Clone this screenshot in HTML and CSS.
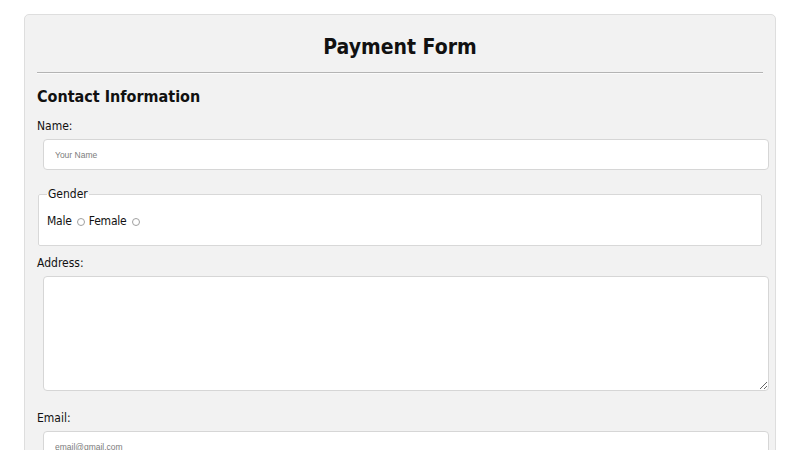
FILE: index.html
```html
<!DOCTYPE html>
<html lang="en">
<head>
<meta charset="utf-8">
<title>Payment Form</title>
<link rel="stylesheet" href="styles.css">
</head>
<body>
<form class="container">
  <h2 class="title">Payment Form</h2>
  <hr class="divider">
  <h3 class="section">Contact Information</h3>
  <label class="label" for="name">Name:</label>
  <input class="field" id="name" type="text" placeholder="Your Name">
  <fieldset class="group">
    <legend class="legend">Gender</legend>
    <div class="radios">
      <span class="opt">Male</span><input class="radio" type="radio" name="gender">
      <span class="opt">Female</span><input class="radio" type="radio" name="gender">
    </div>
  </fieldset>
  <label class="label label-address" for="address">Address:</label>
  <textarea class="field area" id="address"></textarea>
  <label class="label label-email" for="email">Email:</label>
  <input class="field" id="email" type="email" placeholder="email@gmail.com">
</form>
</body>
</html>
```
FILE: styles.css
```css
html, body {
  margin: 0;
  background: #ffffff;
}
body {
  font-family: "DejaVu Sans Condensed", "DejaVu Sans", sans-serif;
  color: #111;
}
.container {
  display: flex;
  flex-direction: column;
  margin: 14px 24px;
  padding: 0 12px 30px;
  background: #f2f2f2;
  border: 1px solid #dedede;
  border-radius: 5px;
}
.title {
  margin: 0;
  padding-top: 19px;
  font-size: 21px;
  line-height: 26px;
  text-align: center;
  font-weight: bold;
}
.divider {
  margin: 12px 0 0;
  height: 0;
  border: 0;
  border-top: 1px solid #b4b4b4;
  border-bottom: 1px solid #fbfbfb;
}
.section {
  margin: 13px 0 0;
  font-size: 16px;
  line-height: 20px;
  font-weight: bold;
}
.label {
  margin-top: 12px;
  font-size: 12px;
  line-height: 14px;
}
.field {
  box-sizing: border-box;
  width: 100%;
  height: 31px;
  margin: 6px 0 0 6px;
  padding: 0 11px;
  background: #fff;
  border: 1px solid #d6d6d6;
  border-radius: 4px;
  font-family: "Liberation Sans", Arial, sans-serif;
  font-size: 8.5px;
  color: #333;
  outline: none;
}
.field::placeholder {
  color: #7c7c7c;
}
.group {
  margin: 17px 1px 0;
  padding: 0 8px 17px;
  background: #fff;
  border: 1px solid #d8d8d8;
  border-radius: 2px;
  min-width: 0;
}
.legend {
  padding: 0 1px;
  font-size: 12px;
  line-height: 14px;
}
.radios {
  display: flex;
  align-items: center;
  margin-top: 13px;
  font-size: 12px;
  line-height: 14px;
}
.opt {
  letter-spacing: -0.2px;
}
.radio {
  appearance: none;
  -webkit-appearance: none;
  box-sizing: border-box;
  width: 8px;
  height: 8px;
  margin: 1px 4px 0 5px;
  border: 1px solid #a0a0a0;
  border-radius: 50%;
  background: #fff;
}
.label-address {
  margin-top: 10px;
}
.area {
  height: 115px;
  resize: vertical;
}
.label-email {
  margin-top: 20px;
}
```
